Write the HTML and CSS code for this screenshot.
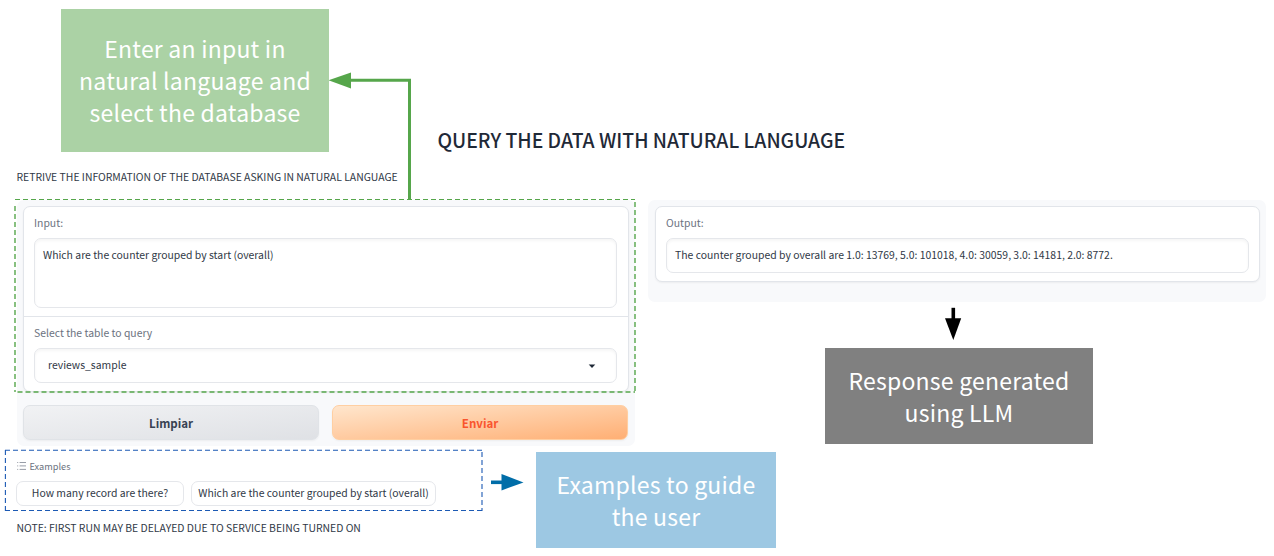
FILE: index.html
```html
<!DOCTYPE html>
<html lang="en">
<head>
<meta charset="utf-8">
<title>Query the data with natural language</title>
<link rel="stylesheet" href="styles.css">
</head>
<body>
<main class="app">
  <h1 class="title"><span>QUERY THE DATA WITH NATURAL LANGUAGE</span></h1>
  <p class="intro"><span>RETRIVE THE INFORMATION OF THE DATABASE ASKING IN NATURAL LANGUAGE</span></p>
  <div class="columns">
    <section class="panel">
      <div class="card">
        <div class="field">
          <div class="label"><span>Input:</span></div>
          <div class="box area"><span>Which are the counter grouped by start (overall)</span></div>
        </div>
        <div class="field select-field">
          <div class="label"><span>Select the table to query</span></div>
          <div class="box select"><span>reviews_sample</span>
            <svg class="caret" width="8" height="5" viewBox="0 0 8 5"><path d="M.7 .6h6.6L4 4z" fill="#1f2937"/></svg>
          </div>
        </div>
      </div>
      <div class="buttons">
        <button class="btn secondary"><span>Limpiar</span></button>
        <button class="btn primary"><span>Enviar</span></button>
      </div>
    </section>
    <section class="panel output-panel">
      <div class="card output-card">
        <div class="field">
          <div class="label"><span>Output:</span></div>
          <div class="box single"><span>The counter grouped by overall are 1.0: 13769, 5.0: 101018, 4.0: 30059, 3.0: 14181, 2.0: 8772.</span></div>
        </div>
      </div>
    </section>
  </div>
  <div class="examples-label">
    <svg width="9" height="8" viewBox="0 0 9 8" fill="none" stroke="#7d8490" stroke-width=".8"><path d="M2.6 .5H9M2.6 3.9H9M2.6 7.4H9M.2 .5h1M.2 3.9h1M.2 7.4h1"/></svg>
    <span>Examples</span>
  </div>
  <div class="examples">
    <div class="chip first"><span>How many record are there?</span></div>
    <div class="chip"><span>Which are the counter grouped by start (overall)</span></div>
  </div>
  <p class="note"><span>NOTE: FIRST RUN MAY BE DELAYED DUE TO SERVICE BEING TURNED ON</span></p>
</main>

<svg class="annotations" width="1274" height="556" viewBox="0 0 1274 556" fill="none">
  <g stroke="#56a64b" stroke-dasharray="5 3">
    <path d="M15 199.5H635" stroke-width="1.1"/>
    <path d="M635 202V392M15 206V392M17.5 392H635" stroke-width="1.4"/>
  </g>
  <g stroke="#1c5ab4" stroke-dasharray="5 3">
    <path d="M5 450.2H482" stroke-width="1.1"/>
    <path d="M5.4 450V511M5 510.5H482" stroke-width="1.1"/>
    <path d="M482 452V511" stroke-width="1.1"/>
  </g>
  <path d="M409.5 199V80.3H349" stroke="#56a64b" stroke-width="3"/>
  <path d="M328.5 80.3 351 72.5v16z" fill="#56a64b"/>
  <path d="M491 482.3h12" stroke="#006da8" stroke-width="3.6"/>
  <path d="M523.5 482.4 501.5 474v16.5z" fill="#006da8"/>
  <path d="M953.3 307.8V320" stroke="#000" stroke-width="3.6"/>
  <path d="M953.3 340 945 318.3h16.2z" fill="#000"/>
</svg>
<div class="callout green"><span>Enter an input in</span><span>natural language and</span><span>select the database</span></div>
<div class="callout gray"><span>Response generated</span><span>using LLM</span></div>
<div class="callout blue"><span>Examples to guide</span><span>the user</span></div>
</body>
</html>
```
FILE: styles.css
```css
* { box-sizing: border-box; }
body {
  margin: 0;
  width: 1274px;
  height: 556px;
  overflow: hidden;
  position: relative;
  background: #fff;
  color: #2f3846;
  font-family: "Noto Sans CJK SC", "Open Sans", sans-serif;
  font-size: 10.42px;
  line-height: 16px;
}
h1, p { margin: 0; font-weight: 400; }
.app { padding: 126px 8px 0 16.5px; }
.title {
  color: #1f2937;
  font-size: 19.37px;
  font-weight: 500;
  line-height: 28px;
  text-align: center;
}
.intro { margin-top: 15px; }
.columns {
  display: flex;
  align-items: flex-start;
  gap: 13px;
  margin: 15px 0 0 .5px;
}
.panel {
  width: 618px;
  height: 246px;
  padding: 6px 6px 0;
  background: #f8f9fb;
  border-radius: 7px;
}
.output-panel { height: 102px; padding: 6px 6px 6px 7px; }
.card {
  height: 186px;
  background: #fff;
  border: 1px solid #e2e5ea;
  border-radius: 7px;
  box-shadow: 0 1px 2px rgba(0, 0, 0, .05);
}
.output-card { height: 76px; }
.field { padding: 8px 11px 0 10px; }
.output-card .field { padding-right: 10px; }
.select-field {
  margin-top: 8px;
  border-top: 1px solid #e2e5ea;
}
.label { color: #6b7280; }
.box {
  display: flex;
  margin-top: 7px;
  padding: 8px;
  border: 1px solid #e5e7eb;
  border-radius: 7px;
  box-shadow: inset 0 2px 3px rgba(0, 0, 0, .04);
}
.area { height: 70px; }
.single { height: 35px; }
.select {
  height: 35px;
  padding: 7px 20px 9px 13px;
  align-items: center;
  justify-content: space-between;
}
.caret { margin-top: 3px; }
.buttons { display: flex; gap: 13px; margin-top: 13px; }
.btn {
  width: 296px;
  height: 35px;
  padding: 0;
  border: 1px solid #e0e3e7;
  border-radius: 7px;
  font: 700 11.5px/20px "Noto Sans CJK SC", sans-serif;
  color: #374151;
  box-shadow: 0 1px 2px rgba(0, 0, 0, .05);
}
.secondary { background: linear-gradient(to bottom right, #f1f2f4, #dfe1e5); }
.primary {
  background: linear-gradient(to bottom right, #ffe6cd, #ffaf74);
  border-color: #ffcfa2;
  color: #f9552e;
}
.examples-label {
  display: flex;
  align-items: center;
  gap: 4px;
  margin-top: 13px;
  font-size: 9.2px;
  line-height: 14px;
  color: #6b7280;
}
.examples { display: flex; gap: 7px; margin: 8px 0 0 -.5px; }
.chip {
  width: 245px;
  height: 25px;
  border: 1px solid #e5e7eb;
  border-radius: 7px;
  line-height: 22px;
  text-align: center;
  white-space: nowrap;
}
.chip.first { width: 168px; }
.note { margin-top: 14px; }
.annotations { position: absolute; left: 0; top: 0; }
.callout {
  position: absolute;
  display: flex;
  flex-direction: column;
  align-items: center;
  justify-content: center;
  color: #fff;
  font-size: 23px;
  line-height: 32px;
  letter-spacing: .22px;
}
.green { left: 61px; top: 9px; width: 268px; height: 143px; padding-bottom: 1px; background: #abd2a5; }
.gray { left: 825px; top: 348px; width: 268px; height: 96px; background: #808080; }
.blue { left: 536px; top: 452px; width: 240px; height: 96px; background: #9dc8e3; }
```
